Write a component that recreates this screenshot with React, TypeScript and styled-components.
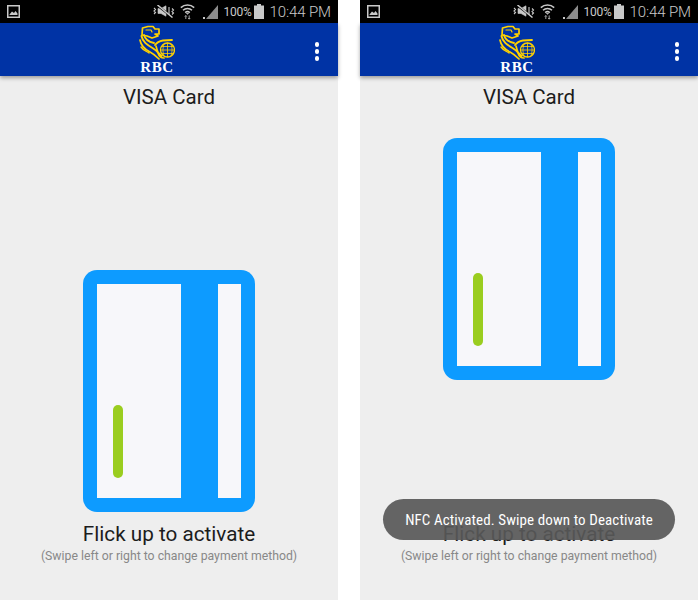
import React from "react";
import styled, { createGlobalStyle } from "styled-components";

const Global = createGlobalStyle`
  html, body { margin: 0; padding: 0; background: #fff; }
  body { font-family: Roboto, "Noto Sans", sans-serif; }
`;

const Page = styled.div`
  display: flex;
  gap: 22px;
  width: 698px;
  height: 600px;
  overflow: hidden;
`;

const Phone = styled.section`
  position: relative;
  display: flex;
  flex-direction: column;
  width: 338px;
  height: 600px;
  background: #eeeeee;
`;

const StatusBar = styled.div`
  display: flex;
  align-items: center;
  height: 23px;
  flex: none;
  padding: 0 7px;
  background: #000;
  color: #c9c9c9;
  box-sizing: border-box;
`;

const StatusRight = styled.div`
  display: flex;
  align-items: center;
  margin-left: auto;
`;

const Percent = styled.span`
  font-size: 12px;
  letter-spacing: -0.25px;
  margin: 0 2px 0 5px;
`;

const Time = styled.span`
  font-size: 15px;
  font-weight: 300;
  margin-left: 6px;
  letter-spacing: -0.1px;
`;

const Gap = styled.span<{ $w: number }>`
  width: ${(p) => p.$w}px;
`;

const Header = styled.header`
  position: relative;
  z-index: 1;
  display: flex;
  align-items: flex-start;
  flex: none;
  height: 53px;
  padding-left: 139px;
  padding-right: 19px;
  background: #0033a5;
  box-shadow: 0 2px 4px rgba(0, 0, 0, 0.35);
  box-sizing: border-box;
`;

const Logo = styled.div`
  display: flex;
  flex-direction: column;
  align-items: center;
  width: 36px;
  padding-top: 2px;
`;

const LogoText = styled.span`
  font-family: "Liberation Serif", serif;
  font-weight: 700;
  font-size: 15px;
  line-height: 10px;
  letter-spacing: 0.6px;
  color: #fff;
`;

const Dots = styled.div`
  display: flex;
  flex-direction: column;
  gap: 2.5px;
  margin-left: auto;
  margin-top: 19px;
`;

const Dot = styled.span`
  width: 4.5px;
  height: 4.5px;
  border-radius: 50%;
  background: #fff;
`;

const Main = styled.main`
  display: flex;
  flex-direction: column;
  align-items: center;
  flex: 1;
  padding-top: 7px;
  padding-bottom: 36px;
`;

const Title = styled.h1`
  margin: 0;
  font-size: 20.5px;
  font-weight: 400;
  line-height: 28px;
  color: #1c1c1c;
`;

const Card = styled.div<{ $top: number }>`
  display: flex;
  gap: 37px;
  width: 172px;
  height: 242px;
  margin-top: ${(p) => p.$top}px;
  padding: 14px;
  background: #0d9bff;
  border-radius: 14px;
  box-sizing: border-box;
`;

const Panel = styled.div<{ $w: number }>`
  display: flex;
  align-items: flex-end;
  width: ${(p) => p.$w}px;
  padding: 0 0 20px 16px;
  background: #f7f7fa;
  box-sizing: border-box;
`;

const Chip = styled.div`
  width: 9.5px;
  height: 73px;
  border-radius: 5px;
  background: #9acd1f;
`;

const Footer = styled.div`
  display: flex;
  flex-direction: column;
  align-items: center;
  margin-top: auto;
`;

const Flick = styled.div`
  font-size: 20.7px;
  line-height: 26px;
  color: #1c1c1c;
`;

const Hint = styled.div`
  font-size: 12.25px;
  line-height: 16px;
  margin-top: 1px;
  color: #888888;
`;

const Toast = styled.div`
  position: absolute;
  z-index: 2;
  left: 23px;
  top: 499px;
  display: flex;
  align-items: center;
  justify-content: center;
  width: 292px;
  height: 41px;
  border-radius: 21px;
  background: rgba(88, 88, 88, 0.92);
  color: #fff;
  font-size: 15px;
  font-stretch: 85%;
  letter-spacing: 0.1px;
`;

const ImageIcon = () => (
  <svg width="13" height="13" viewBox="0 0 13 13" fill="none">
    <rect x="0.75" y="0.75" width="11.5" height="11.5" stroke="#c9c9c9" strokeWidth="1.5" />
    <path d="M2.5 9.5 5 6.5l2 1.5 1.5-2 2 2.5v1.5h-8z" fill="#c9c9c9" />
  </svg>
);

const MuteIcon = () => (
  <svg width="22" height="13" viewBox="0 0 22 13" fill="none" stroke="#c9c9c9">
    <path d="M1 3l1.500 1.500L1 6l1.500 1.500L1 9" strokeWidth="1.100" />
    <path d="M5 3.500h3L13 .8v10.400L8 8.500H5z" fill="#c9c9c9" strokeWidth="0.6" />
    <path d="M5 .8 19 12" stroke="#000" strokeWidth="2.200" />
    <path d="M4.500 0 19.500 12.500" strokeWidth="1.500" />
    <path d="M16 2v8M19 3.500l1.500 1.500L19 6.500l1.500 1.500L19 9.500" strokeWidth="1.100" />
  </svg>
);

const WifiIcon = () => (
  <svg width="15" height="17" viewBox="0 0 15 17" fill="none" stroke="#c9c9c9" strokeWidth="1.5">
    <path d="M.8 4.600a9.800 9.800 0 0 1 13.400 0" />
    <path d="M3 7.200a6.600 6.600 0 0 1 9 0" />
    <path d="M5.200 9.600a3.400 3.400 0 0 1 4.600 0" />
    <path d="M7.500 11.200 6.400 10.200h2.200z" fill="#c9c9c9" strokeWidth="0.8" />
    <path d="M5.800 16v-3M4.800 13.600l1-1.200 1 1.200M9.200 12.400v3.400M8.200 15l1 1.200 1-1.200" strokeWidth="0.8" />
  </svg>
);

const SignalIcon = () => (
  <svg width="15" height="14" viewBox="0 0 15 14">
    <path d="M15 0v14H3z" fill="#8c8c8c" />
    <rect x="0" y="12" width="2" height="2" fill="#c9c9c9" />
  </svg>
);

const BatteryIcon = () => (
  <svg width="10" height="15" viewBox="0 0 10 15">
    <path d="M3 0h4v1.500h3V15H0V1.500h3z" fill="#c9c9c9" />
  </svg>
);

const LionLogo = () => (
  <svg width="36" height="37" viewBox="0 0 36 37" fill="none" stroke="#ffd200" strokeLinecap="round" strokeLinejoin="round">
    <path d="M3.500 3 9 1.500h5l2 2.500h4v5h-4l3 2-6 2-5-2-5-1z" strokeWidth="1.700" />
    <path d="M7 5h5l1 2" strokeWidth="1.200" />
    <path d="M5 10c1 4 5 7 10 8" strokeWidth="1.800" />
    <path d="M2.500 11c1 6 6 9 11 12s6 5 9 8" strokeWidth="1.900" />
    <path d="M1 15c1 6 6 10 10 12s6 4 9 7" strokeWidth="1.700" />
    <path d="M2 22c2 3 5 4 8 6" strokeWidth="1.400" />
    <circle cx="28.500" cy="25" r="7" strokeWidth="1.300" />
    <path d="M21.500 25h14M28.500 18v14M22.500 21.500h12M22.500 28.500h12M25 19c-1.500 4-1.500 8 0 12M32 19c1.500 4 1.500 8 0 12" strokeWidth="0.8" />
    <path d="M16 20c2-3 5-4 8-4.500l9-.5" strokeWidth="1.800" />
    <path d="M17 21l2 7c1 3 3 5 6 5" strokeWidth="1.700" />
  </svg>
);

function Screen({ cardTop, toast }: { cardTop: number; toast?: string }) {
  return (
    <Phone>
      <StatusBar>
        <ImageIcon />
        <StatusRight>
          <MuteIcon />
          <Gap $w={5} />
          <WifiIcon />
          <Gap $w={8} />
          <SignalIcon />
          <Percent>100%</Percent>
          <BatteryIcon />
          <Time>10:44 PM</Time>
        </StatusRight>
      </StatusBar>
      <Header>
        <Logo>
          <LionLogo />
          <LogoText>RBC</LogoText>
        </Logo>
        <Dots>
          <Dot />
          <Dot />
          <Dot />
        </Dots>
      </Header>
      <Main>
        <Title>VISA Card</Title>
        <Card $top={cardTop}>
          <Panel $w={84}>
            <Chip />
          </Panel>
          <Panel $w={23} />
        </Card>
        <Footer>
          <Flick>Flick up to activate</Flick>
          <Hint>(Swipe left or right to change payment method)</Hint>
        </Footer>
      </Main>
      {toast && <Toast>{toast}</Toast>}
    </Phone>
  );
}

export default function App() {
  return (
    <>
      <Global />
      <Page>
        <Screen cardTop={159} />
        <Screen cardTop={27} toast="NFC Activated. Swipe down to Deactivate" />
      </Page>
    </>
  );
}
